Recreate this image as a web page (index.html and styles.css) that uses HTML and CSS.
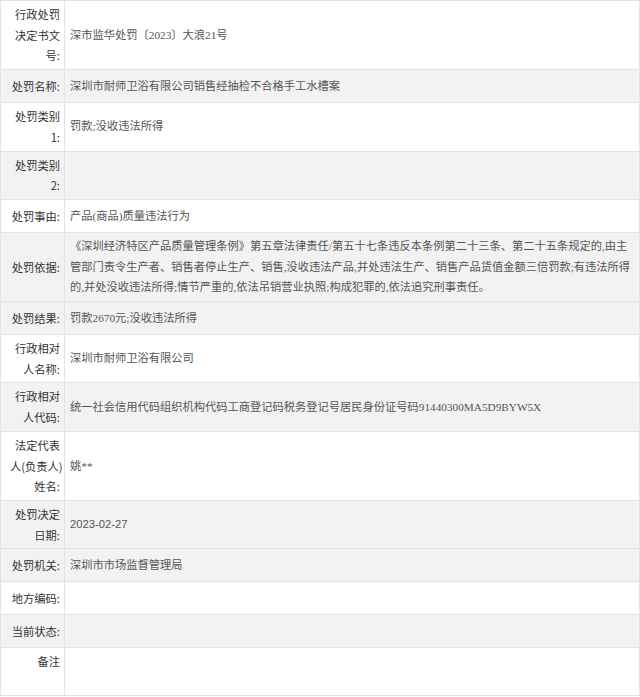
FILE: index.html
```html
<!DOCTYPE html>
<html>
  <head>
    <meta charset="UTF-8">
    <title>行政处罚信息</title>
    <link rel="stylesheet" href="styles.css">
  </head>
  <body>
    <table class="penalty">
      <colgroup>
        <col class="col-label">
        <col>
      </colgroup>
      <tbody>
        <tr>
          <th>行政处罚决定书文号:</th>
          <td>深市监华处罚〔2023〕大浪21号</td>
        </tr>
        <tr class="shade">
          <th>处罚名称:</th>
          <td>深圳市耐师卫浴有限公司销售经抽检不合格手工水槽案</td>
        </tr>
        <tr>
          <th>处罚类别1:</th>
          <td>罚款;没收违法所得</td>
        </tr>
        <tr class="shade">
          <th>处罚类别2:</th>
          <td></td>
        </tr>
        <tr>
          <th>处罚事由:</th>
          <td>产品(商品)质量违法行为</td>
        </tr>
        <tr class="shade">
          <th>处罚依据:</th>
          <td>《深圳经济特区产品质量管理条例》第五章法律责任/第五十七条违反本条例第二十三条、第二十五条规定的,由主管部门责令生产者、销售者停止生产、销售,没收违法产品,并处违法生产、销售产品货值金额三倍罚款;有违法所得的,并处没收违法所得;情节严重的,依法吊销营业执照;构成犯罪的,依法追究刑事责任。</td>
        </tr>
        <tr class="shade">
          <th>处罚结果:</th>
          <td>罚款2670元;没收违法所得</td>
        </tr>
        <tr>
          <th>行政相对人名称:</th>
          <td>深圳市耐师卫浴有限公司</td>
        </tr>
        <tr class="shade">
          <th>行政相对人代码:</th>
          <td>统一社会信用代码组织机构代码工商登记码税务登记号居民身份证号码91440300MA5D9BYW5X</td>
        </tr>
        <tr>
          <th>法定代表<span class="nw">人(负责人)</span>姓名:</th>
          <td>姚**</td>
        </tr>
        <tr class="shade">
          <th>处罚决定日期:</th>
          <td class="sans">2023-02-27</td>
        </tr>
        <tr class="shade">
          <th>处罚机关:</th>
          <td>深圳市市场监督管理局</td>
        </tr>
        <tr>
          <th>地方编码:</th>
          <td></td>
        </tr>
        <tr class="shade">
          <th>当前状态:</th>
          <td></td>
        </tr>
        <tr class="note">
          <th>备注</th>
          <td></td>
        </tr>
      </tbody>
    </table>
  </body>
</html>
```

FILE: styles.css
```css
body {
  margin: 0;
  background-color: #fff;
}
.penalty {
  width: 640px;
  table-layout: fixed;
  border-collapse: collapse;
  font-size: 11.25px;
  line-height: 20.7px;
}
.col-label {
  width: 64px;
}
.penalty th, .penalty td {
  height: 26px;
  padding: 3px 5px;
  border: 1px solid #e3e3e3;
  vertical-align: middle;
}
.penalty th {
  padding: 3px 4px 3px 9px;
  text-align: right;
  font-weight: normal;
  font-family: "Noto Sans CJK SC", sans-serif;
  color: #333;
}
.penalty th .nw {
  white-space: nowrap;
}
.penalty td {
  text-align: left;
  font-family: "Liberation Serif", "Noto Sans CJK SC", serif;
  color: #555;
}
.penalty td.sans {
  font-family: "Liberation Sans", "Noto Sans CJK SC", sans-serif;
}
.shade th, .shade td {
  background-color: #f2f2f2;
}
.note th {
  height: 41px;
  vertical-align: top;
}
```
